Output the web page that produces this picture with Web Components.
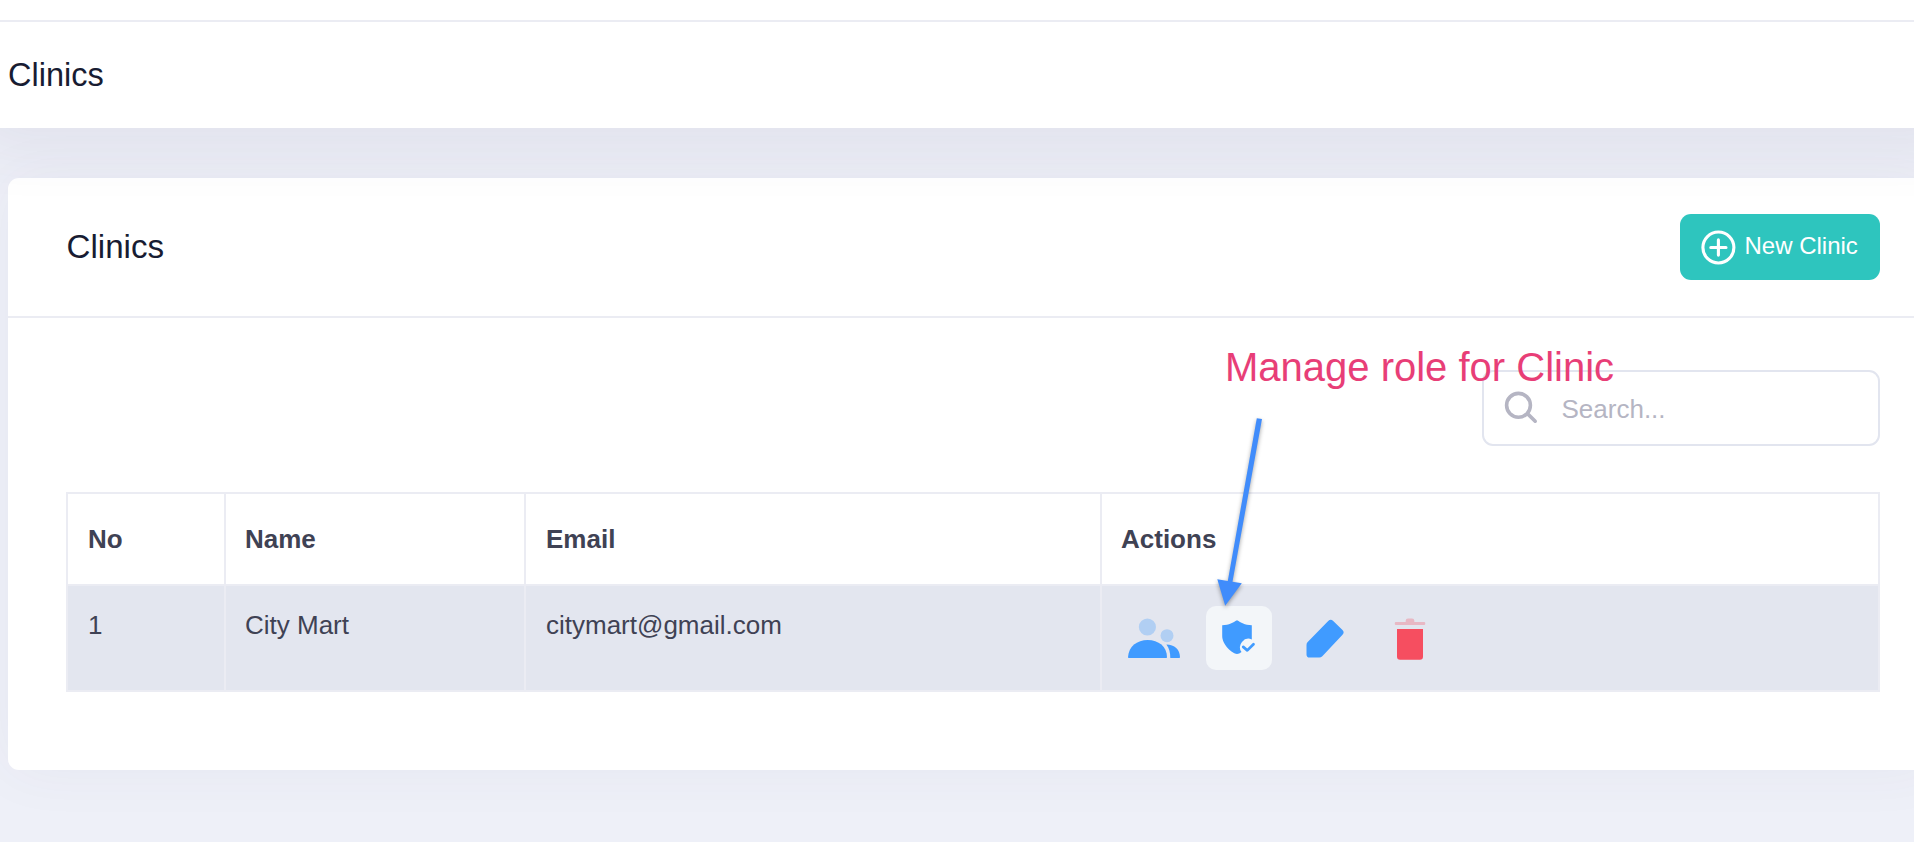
<!DOCTYPE html>
<html lang="en">
<head>
<meta charset="utf-8">
<title>Clinics</title>
<style>
html, body { margin: 0; height: 100%; overflow: hidden; }
body { background: #eef0f8; font-family: "Liberation Sans", Arial, sans-serif; font-size: 26px; color: #3f4254; }
</style>
</head>
<body>
<clinic-page></clinic-page>
<script>
const define = (name, html) => {
  const t = document.createElement('template');
  t.innerHTML = html;
  customElements.define(name, class extends HTMLElement {
    constructor() {
      super();
      this.attachShadow({ mode: 'open' }).append(t.content.cloneNode(true));
    }
  });
};

define('sub-header', `
<style>
:host { display: block; box-sizing: border-box; height: 128px; width: 1990px; margin-left: -26px; padding-top: 20px; background: #fff; position: relative; z-index: 1; box-shadow: 0 20px 60px rgba(82,63,105,.08); }
.bar { box-sizing: border-box; height: 108px; border-top: 2px solid #ebecf3; padding-left: 34px; display: flex; align-items: center; }
h1 { margin: 0; font-weight: 400; font-size: 32.5px; line-height: 40px; color: #181c32; }
</style>
<div class="bar"><h1><slot></slot></h1></div>`);

define('clinic-card', `
<style>
:host { display: flex; flex-direction: column; box-sizing: border-box; width: 1930px; height: 592px; margin: 50px 0 0 8px; background: #fff; border-radius: 11px; box-shadow: 0 0 60px rgba(82,63,105,.05); }
header { box-sizing: border-box; height: 140px; border-bottom: 2px solid #ebecf3; padding: 0 58px; display: flex; align-items: center; justify-content: space-between; }
h2 { margin: 0; padding-left: .5px; font-weight: 400; font-size: 33.15px; line-height: 40px; color: #181c32; }
.body { padding: 52px 58px 0; display: flex; flex-direction: column; gap: 46px; align-items: stretch; }
</style>
<header><h2><slot name="title"></slot></h2><slot name="tool"></slot></header>
<div class="body"><slot></slot></div>`);

define('new-button', `
<style>
:host { display: flex; align-items: center; box-sizing: border-box; width: 200px; height: 66px; padding-left: 21px; gap: 8.5px; background: #2ec5be; border-radius: 11px; color: #fff; font-size: 24px; line-height: 30px; }
svg { width: 35px; height: 35px; flex: none; }
span { white-space: nowrap; padding-bottom: 2px; }
</style>
<svg viewBox="0 0 35 35" fill="none" stroke="#fff" stroke-width="3.1" stroke-linecap="round"><circle cx="17.4" cy="17.5" r="15.5"/><path d="M17.4 9.900v15.200M9.800 17.500h15.200"/></svg>
<span><slot></slot></span>`);

define('search-box', `
<style>
:host { display: flex; align-items: center; align-self: flex-end; box-sizing: border-box; width: 398px; height: 76px; border: 2px solid #e2e5ef; border-radius: 11px; padding-left: 20px; gap: 23.5px; color: #b5b5c3; }
svg { width: 34px; height: 34px; flex: none; }
span { line-height: 32px; padding-top: 2px; }
</style>
<svg viewBox="0 0 34 34" fill="none" stroke="#b5b5c3" stroke-width="3.6" stroke-linecap="round"><circle cx="14.500" cy="14.300" r="11.900"/><path d="M24.200 23.400L31.200 30.200"/></svg>
<span><slot></slot></span>`);

define('clinic-table', `
<style>
:host { display: grid; grid-template-columns: 156px 298px 574px 776px; grid-template-rows: 90px 104px; gap: 2px; padding: 2px; background: #ebecf3; }
</style>
<slot></slot>`);

define('table-cell', `
<style>
:host { display: block; box-sizing: border-box; background: #e3e6ef; padding: 20px 20px 0; line-height: 39px; }
:host([tight]) { padding-left: 19px; }
:host([head]) { background: #fff; font-weight: 700; padding-top: 26px; }
:host([actions]) { padding: 20px 20px 0 17px; display: flex; }
</style>
<slot></slot>`);

define('row-actions', `
<style>
:host { display: flex; align-items: flex-start; gap: 20px; }
.b { width: 66px; height: 64px; border-radius: 10px; flex: none; display: flex; }
.on { background: #f3f6f9; }
svg { width: 66px; height: 64px; display: block; }
.u { width: 67px; } .u svg { width: 67px; }
</style>
<div class="b u"><svg viewBox="1119 606 67 64"><g fill="#409bff"><g opacity=".3"><circle cx="1147.4" cy="627" r="8.6"/><circle cx="1167" cy="635.7" r="6.5"/></g><path d="M1128 657.3C1128.500 646.500 1137 640 1147.700 640S1167 646.500 1167 657.300Q1167 658 1166.300 658H1128.800Q1128 658 1128 657.300Z"/><path d="M1166.400 644.500C1174.500 644.500 1180 649.500 1180 657.200Q1180 658 1179.200 658H1170.300C1170.300 652.700 1169.300 648.400 1166.400 644.500Z"/></g></svg></div>
<div class="b on"><svg viewBox="1206 606 66 64"><path fill="#409bff" d="M1222.200 625.200C1229.500 625 1233 622.300 1237 620.200C1241 622.300 1244.500 625 1251.800 625.200V639.400A8.500 8.500 0 0 0 1241.500 652C1240 653 1238.500 654 1237 654C1232.500 653.500 1222.200 645 1222.200 636Z"/><path fill="none" stroke="#409bff" stroke-width="2.700" stroke-linecap="round" stroke-linejoin="round" d="M1243.200 646.900L1247.300 650.400L1253.500 644.200"/></svg></div>
<div class="b"><svg viewBox="1292 606 66 64"><path fill="#409bff" d="M1328.200 620.900Q1330.700 618.700 1333.200 620.900L1342.500 630Q1344.800 632.300 1342.500 634.800L1322.300 656.300Q1321 657.600 1319.200 657.600H1309.600Q1306.500 657.600 1306.500 654.500V645Q1306.500 643.200 1307.700 642Z"/></svg></div>
<div class="b"><svg viewBox="1378 606 66 64"><path fill="#f64e60" d="M1397 629H1423V656.800Q1423 659.800 1420 659.800H1400Q1397 659.800 1397 656.800Z"/><path fill="#f64e60" opacity=".3" d="M1405.700 621.900V620.600Q1405.700 618.400 1408 618.400H1412Q1414.300 618.400 1414.300 620.600V621.900H1424.200Q1425.200 621.900 1425.200 622.900V624Q1425.200 625 1424.200 625H1395.800Q1394.800 625 1394.800 624V622.900Q1394.800 621.900 1395.800 621.900Z"/></svg></div>`);

define('role-callout', `
<style>
:host { position: absolute; left: 1216px; top: 340px; width: 420px; height: 280px; z-index: 2; pointer-events: none; }
span { display: block; padding: 4px 0 0 9px; font-size: 40px; line-height: 46px; color: #e83e77; white-space: nowrap; }
svg { position: absolute; left: 0; top: 0; width: 100%; height: 100%; overflow: visible; filter: drop-shadow(0 2px 2px rgba(0,0,0,.35)); }
</style>
<svg viewBox="1216 340 420 280" fill="#408cfb"><path d="M1256.800 418.200L1262 419L1232.500 581.700L1241.800 583.300L1225.200 605.700L1217.300 579.200L1227.800 580.900Z"/></svg>
<span><slot></slot></span>`);

define('clinic-page', `
<style>:host { display: block; position: relative; width: 1914px; height: 842px; overflow: hidden; }</style>
<sub-header>Clinics</sub-header>
<clinic-card>
  <span slot="title">Clinics</span>
  <new-button slot="tool">New Clinic</new-button>
  <search-box>Search...</search-box>
  <clinic-table>
    <table-cell head>No</table-cell><table-cell head tight>Name</table-cell><table-cell head>Email</table-cell><table-cell head tight>Actions</table-cell>
    <table-cell>1</table-cell><table-cell tight>City Mart</table-cell><table-cell>citymart@gmail.com</table-cell>
    <table-cell actions><row-actions></row-actions></table-cell>
  </clinic-table>
</clinic-card>
<role-callout>Manage role for Clinic</role-callout>`);
</script>
</body>
</html>
